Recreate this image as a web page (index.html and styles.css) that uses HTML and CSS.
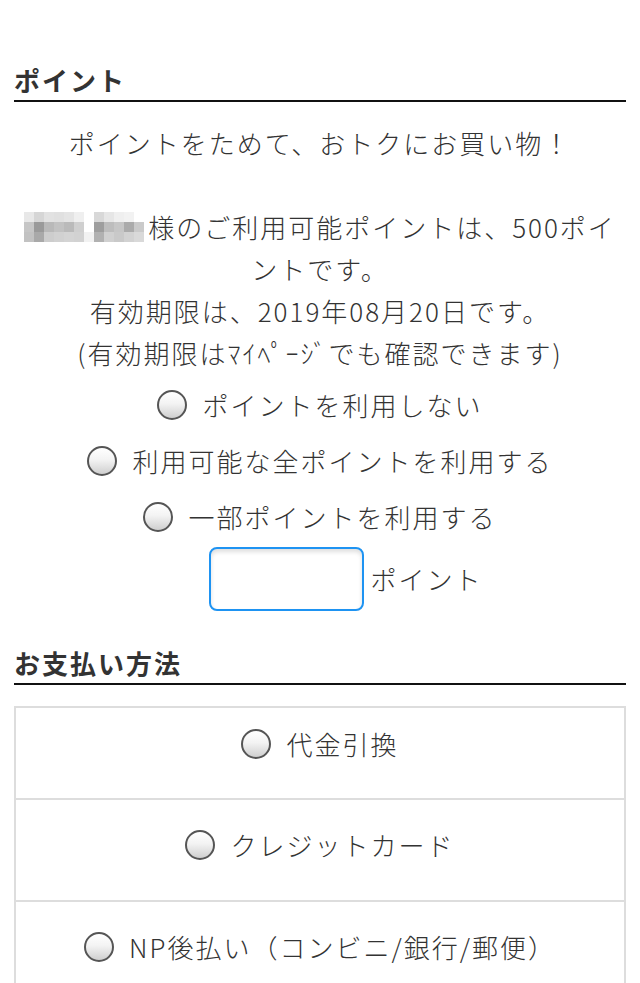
FILE: index.html
```html
<!DOCTYPE html>
<html lang="ja">
<head>
<meta charset="utf-8">
<title>ポイント・お支払い方法</title>
<link rel="stylesheet" href="styles.css">
</head>
<body>
<main class="page">
  <section class="points">
    <h2 class="section-title">ポイント</h2>
    <p class="lead">ポイントをためて、おトクにお買い物！</p>
    <p class="balance"><span class="name-mosaic"><svg width="120" height="30" viewBox="0 0 120 30" aria-hidden="true">
      <rect x="0" y="0" width="10" height="10" fill="#e8e8e8"/><rect x="10" y="0" width="10" height="10" fill="#d6d6d6"/><rect x="20" y="0" width="10" height="10" fill="#e2e2e2"/><rect x="30" y="0" width="10" height="10" fill="#e0e0e0"/><rect x="40" y="0" width="10" height="10" fill="#e4e4e4"/><rect x="50" y="0" width="10" height="10" fill="#efefef"/><rect x="70" y="0" width="10" height="10" fill="#d8d8d8"/><rect x="80" y="0" width="10" height="10" fill="#e6e6e6"/><rect x="90" y="0" width="10" height="10" fill="#efefef"/><rect x="100" y="0" width="10" height="10" fill="#f2f2f2"/>
      <rect x="0" y="10" width="10" height="10" fill="#c6c6c6"/><rect x="10" y="10" width="10" height="10" fill="#9a9a9a"/><rect x="20" y="10" width="10" height="10" fill="#b9b9b9"/><rect x="30" y="10" width="10" height="10" fill="#c2c2c2"/><rect x="40" y="10" width="10" height="10" fill="#bababa"/><rect x="50" y="10" width="10" height="10" fill="#cfcfcf"/><rect x="70" y="10" width="10" height="10" fill="#9e9e9e"/><rect x="80" y="10" width="10" height="10" fill="#bdbdbd"/><rect x="90" y="10" width="10" height="10" fill="#c6c6c6"/><rect x="100" y="10" width="10" height="10" fill="#ababab"/><rect x="110" y="10" width="10" height="10" fill="#cacaca"/>
      <rect x="0" y="20" width="10" height="10" fill="#c2c2c2"/><rect x="10" y="20" width="10" height="10" fill="#a9a9a9"/><rect x="20" y="20" width="10" height="10" fill="#cdcdcd"/><rect x="30" y="20" width="10" height="10" fill="#d1d1d1"/><rect x="40" y="20" width="10" height="10" fill="#d4d4d4"/><rect x="50" y="20" width="10" height="10" fill="#d2d2d2"/><rect x="60" y="20" width="10" height="10" fill="#f2f2f2"/><rect x="70" y="20" width="10" height="10" fill="#b1b1b1"/><rect x="80" y="20" width="10" height="10" fill="#d0d0d0"/><rect x="90" y="20" width="10" height="10" fill="#c9c9c9"/><rect x="100" y="20" width="10" height="10" fill="#d2d2d2"/><rect x="110" y="20" width="10" height="10" fill="#d9d9d9"/>
    </svg></span>様のご利用可能ポイントは、500ポイントです。<br>有効期限は、2019年08月20日です。<br>(有効期限はﾏｲﾍﾟｰｼﾞでも確認できます)</p>
    <div class="options">
      <label class="option"><input type="radio" name="use_point" class="radio"><span>ポイントを利用しない</span></label>
      <label class="option"><input type="radio" name="use_point" class="radio"><span>利用可能な全ポイントを利用する</span></label>
      <label class="option"><input type="radio" name="use_point" class="radio"><span>一部ポイントを利用する</span></label>
    </div>
    <div class="point-input">
      <input type="text" class="point-field" aria-label="利用ポイント">
      <span class="unit">ポイント</span>
    </div>
  </section>

  <section class="payment">
    <h2 class="section-title payment-title">お支払い方法</h2>
    <div class="pay-list">
      <label class="pay-item"><input type="radio" name="payment" class="radio"><span>代金引換</span></label>
      <label class="pay-item"><input type="radio" name="payment" class="radio"><span>クレジットカード</span></label>
      <label class="pay-item"><input type="radio" name="payment" class="radio"><span>NP後払い（コンビニ/銀行/郵便）</span></label>
    </div>
  </section>
</main>
</body>
</html>
```

FILE: styles.css
```css
html, body {
  margin: 0;
  padding: 0;
  background: #fff;
}

body {
  font-family: "Noto Sans CJK JP", "Noto Sans", sans-serif;
  font-weight: 300;
  color: #333;
}

.page {
  padding: 62px 14px 0;
}

.section-title {
  margin: 0;
  font-size: 26px;
  font-weight: 700;
  line-height: 36px;
  letter-spacing: 2px;
  color: #333;
  padding-bottom: 2px;
  border-bottom: 2px solid #111;
}

.lead,
.balance {
  text-align: center;
  font-size: 26px;
  line-height: 42px;
  letter-spacing: 2px;
}

.lead {
  margin: 20px 0 42px;
}

.balance {
  margin: 0;
}

.name-mosaic {
  display: inline-block;
  vertical-align: middle;
  margin-right: 4px;
  height: 30px;
  line-height: 0;
  position: relative;
  top: -4px;
}

.options {
  margin-top: 3px;
  display: flex;
  flex-direction: column;
}

.option {
  height: 56px;
  display: flex;
  align-items: center;
  justify-content: center;
  font-size: 26px;
  line-height: 42px;
  letter-spacing: 2px;
}

.radio {
  appearance: none;
  -webkit-appearance: none;
  box-sizing: border-box;
  width: 30px;
  height: 30px;
  margin: 0 15px 0 0;
  border: 2px solid #555;
  border-radius: 50%;
  background: linear-gradient(to bottom, #ffffff 0%, #f3f3f3 45%, #cfcfcf 100%);
  flex: none;
}

.point-input {
  margin-top: 2px;
  display: flex;
  align-items: center;
  justify-content: center;
  padding-left: 52px;
  height: 64px;
}

.point-field {
  box-sizing: border-box;
  width: 155px;
  height: 64px;
  margin: 0;
  border: 2px solid #1e93f2;
  border-radius: 8px;
  background: #fff;
  box-shadow: inset 0 3px 4px rgba(0, 0, 0, 0.13);
  outline: none;
  padding: 0 8px;
  font: inherit;
}

.unit {
  margin-left: 6px;
  font-size: 26px;
  line-height: 42px;
  letter-spacing: 2px;
}

.payment-title {
  margin-top: 34px;
}

.pay-list {
  margin-top: 21px;
  border: 2px solid #ddd;
}

.pay-item {
  display: flex;
  align-items: center;
  justify-content: center;
  padding: 24px 0 34px;
  font-size: 26px;
  line-height: 42px;
  letter-spacing: 2px;
}

.pay-item:first-child {
  padding: 15px 0 33px;
}

.pay-item + .pay-item {
  border-top: 2px solid #ddd;
}
```
